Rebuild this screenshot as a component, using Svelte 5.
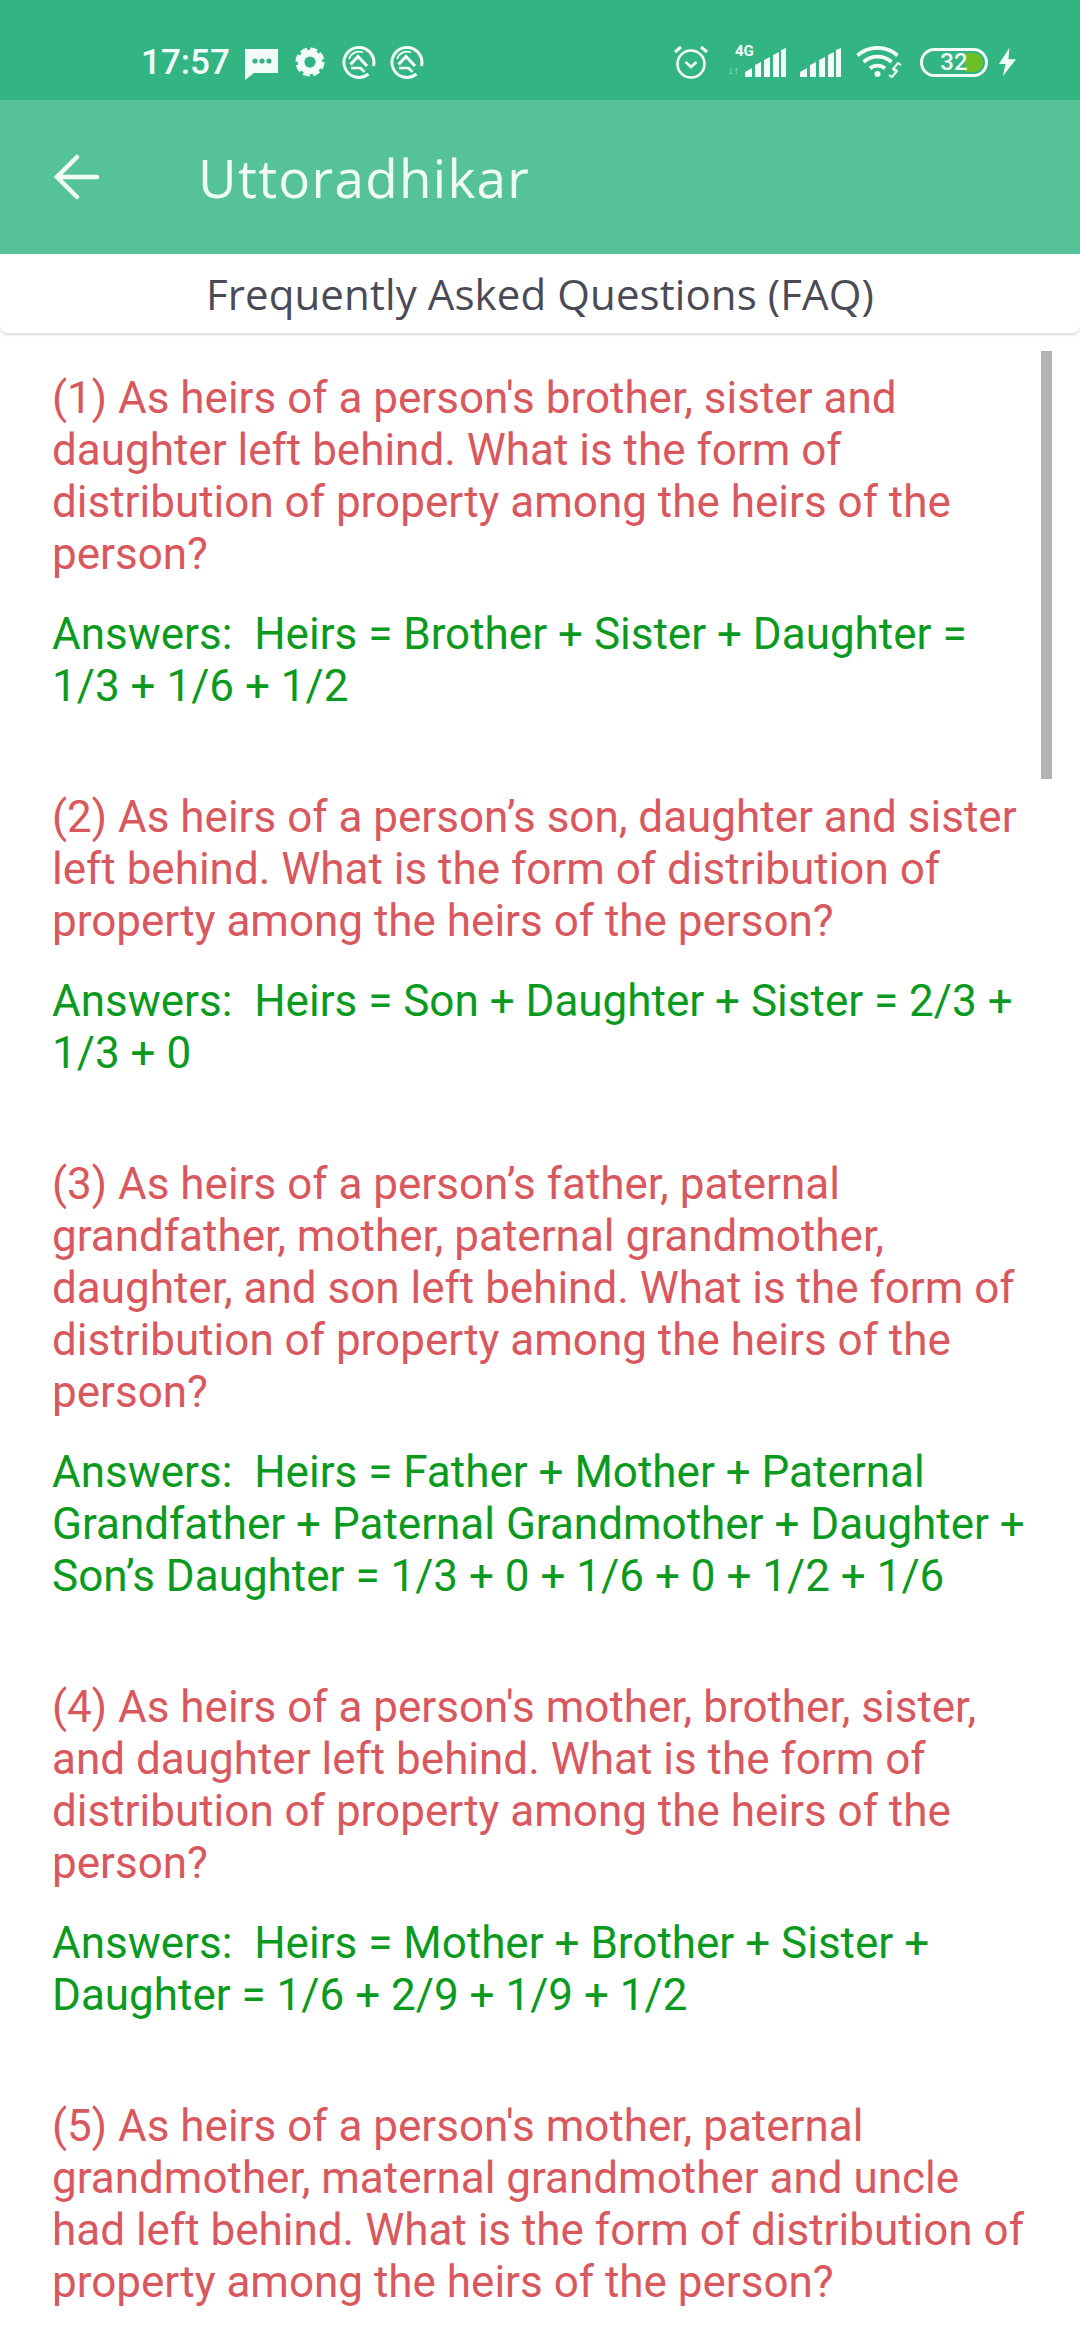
<script lang="ts">
	const faqs = [
		{
			q: "(1) As heirs of a person's brother, sister and daughter left behind. What is the form of distribution of property among the heirs of the person?",
			a: 'Answers:\u00a0 Heirs = Brother + Sister + Daughter = 1/3 + 1/6 + 1/2'
		},
		{
			q: '(2) As heirs of a person’s son, daughter and sister left behind. What is the form of distribution of property among the heirs of the person?',
			a: 'Answers:\u00a0 Heirs = Son + Daughter + Sister = 2/3 + 1/3 + 0'
		},
		{
			q: '(3) As heirs of a person’s father, paternal grandfather, mother, paternal grandmother, daughter, and son left behind. What is the form of distribution of property among the heirs of the person?',
			a: 'Answers:\u00a0 Heirs = Father + Mother + Paternal Grandfather + Paternal Grandmother + Daughter + Son’s Daughter = 1/3 + 0 + 1/6 + 0 + 1/2 + 1/6'
		},
		{
			q: "(4) As heirs of a person's mother, brother, sister, and daughter left behind. What is the form of distribution of property among the heirs of the person?",
			a: 'Answers:\u00a0 Heirs = Mother + Brother + Sister + Daughter = 1/6 + 2/9 + 1/9 + 1/2'
		},
		{
			q: "(5) As heirs of a person's mother, paternal grandmother, maternal grandmother and uncle had left behind. What is the form of distribution of property among the heirs of the person?",
			a: ''
		}
	];
</script>

{#snippet qLogo(links: number)}
	<svg class="ic" style:margin-left="{links}px" width="34" height="34" viewBox="0 0 34 34" fill="none" stroke="#f2fbf7">
		<path d="M26.500 29A15 15 0 1 1 31.500 21" stroke-width="3" />
		<path d="M8.500 19.500L16 11.500l9 9.500" stroke-width="3.200" />
		<path d="M9 23h9.500l4 4" stroke-width="2.600" />
		<path d="M21 7.500A10.500 10.500 0 0 0 7 14" stroke-width="1.800" />
	</svg>
{/snippet}

<div class="screen">
	<div class="status">
		<span class="zeit">17:57</span>
		<svg class="ic" style="margin-left:15px;margin-top:3px" width="33" height="32" viewBox="0 0 33 32">
			<path d="M0 1h33v24H9l-9 7z" fill="#f2fbf7" />
			<circle cx="10" cy="13" r="2.600" fill="#32b583" /><circle cx="17" cy="13" r="2.600" fill="#32b583" /><circle cx="24" cy="13" r="2.600" fill="#32b583" />
		</svg>
		<svg class="ic" style="margin-left:17px" width="30" height="30" viewBox="0 0 32 32">
			<circle cx="16" cy="16" r="9.500" fill="none" stroke="#f2fbf7" stroke-width="7" />
			<circle cx="16" cy="16" r="13" fill="none" stroke="#f2fbf7" stroke-width="5" stroke-dasharray="7 3.200" />
		</svg>
		{@render qLogo(17)}
		{@render qLogo(14)}

		<span class="rest"></span>

		<svg class="ic" width="36" height="36" viewBox="0 0 36 36" fill="none" stroke="#f2fbf7">
			<circle cx="18" cy="20" r="13.500" stroke-width="2.600" />
			<path d="M12.500 18l5.500 5 5.500-5" stroke-width="2.600" />
			<path d="M2 8l6-5M34 8l-6-5" stroke-width="3" />
		</svg>
		<div class="vierg">
			<span class="vg">4G</span>
			<span class="pfeile">↓↑</span>
			<svg class="balken" width="41" height="29" viewBox="0 0 41 29" fill="#f2fbf7">
				<path d="M0 29v-5l7-4v9zM10 29V17l6-3v15zM19 29V12l6-3v20zM28 29V7l6-3v25zM36 29V2l5-2v29z" />
			</svg>
		</div>
		<svg class="ic" style="margin-left:14px" width="41" height="29" viewBox="0 0 41 29" fill="#f2fbf7">
			<path d="M0 29v-5l7-4v9zM10 29V17l6-3v15zM19 29V12l6-3v20zM28 29V7l6-3v25zM36 29V2l5-2v29z" />
		</svg>
		<svg class="ic" style="margin-left:15px" width="47" height="32" viewBox="0 0 47 32" fill="none" stroke="#f2fbf7">
			<path d="M1.500 9.500a30 30 0 0 1 40 0" stroke-width="3.800" />
			<path d="M7.500 16a21 21 0 0 1 28 0" stroke-width="3.800" />
			<path d="M14 22.500a11 11 0 0 1 15 0" stroke-width="3.800" />
			<circle cx="21.500" cy="28" r="3" fill="#f2fbf7" stroke="none" />
			<path d="M33 29l3 2 5-6-2-2M45 19l-3-2-5 6 2 2" stroke-width="2" />
		</svg>
		<div class="akku">
			<span class="akku-fill"></span>
			<span class="akku-zahl">32</span>
		</div>
		<svg class="ic" style="margin-left:10px" width="19" height="30" viewBox="0 0 20 30">
			<path d="M12 0L1 17h7L5 30l14-18h-8z" fill="#f2fbf7" />
		</svg>
	</div>

	<div class="toolbar">
		<svg class="zurueck" width="46" height="46" viewBox="0 0 46 46" fill="none" stroke="#f1fbf6" stroke-width="4.500" stroke-linecap="round">
			<path d="M43 23H3M23 3L3 23l20 20" />
		</svg>
		<span class="titel">Uttoradhikar</span>
	</div>

	<div class="unterkopf">Frequently Asked Questions (FAQ)</div>

	<div class="liste">
		<div class="leiste"></div>
		{#each faqs as f}
			<div class="faq">
				<p class="frage">{f.q}</p>
				{#if f.a}<p class="antwort">{f.a}</p>{/if}
			</div>
		{/each}
	</div>
</div>

<style>
	:global(body) { margin: 0; background: #fff; }
	.screen {
		width: 1080px;
		height: 2340px;
		overflow: hidden;
		display: flex;
		flex-direction: column;
		font-family: Roboto, sans-serif;
	}

	.status {
		height: 100px;
		flex-shrink: 0;
		background: #32b583;
		display: flex;
		align-items: center;
		padding: 24px 63px 0 141px;
		box-sizing: border-box;
		color: #f2fbf7;
	}
	.zeit { font-size: 35px; font-weight: 500; }
	.ic { flex-shrink: 0; display: block; }
	.rest { flex: 1; }

	.vierg { position: relative; width: 58px; height: 30px; margin-left: 19px; }
	.vg { position: absolute; left: 7px; top: -3px; font-size: 15px; line-height: 15px; font-weight: 700; }
	.pfeile { position: absolute; left: 0; bottom: 0; font-size: 11px; line-height: 12px; opacity: 0.6; }
	.balken { position: absolute; right: 0; bottom: 0; }

	.akku {
		position: relative;
		width: 68px;
		height: 29px;
		margin-left: 17px;
		border: 3px solid #f2fbf7;
		border-radius: 15px;
		box-sizing: border-box;
		overflow: hidden;
		text-align: center;
	}
	.akku-fill { position: absolute; left: 42px; top: 2px; width: 18px; height: 19px; background: #6cc024; border-radius: 0 10px 10px 0; }
	.akku-zahl { position: relative; font-size: 24px; line-height: 23px; font-weight: 500; display: block; }

	.toolbar {
		height: 154px;
		flex-shrink: 0;
		background: #55c397;
		display: flex;
		align-items: center;
		padding-left: 54px;
		box-sizing: border-box;
	}
	.zurueck { flex-shrink: 0; }
	.titel {
		margin-left: 98px;
		color: #f1fbf6;
		font-family: "Open Sans", sans-serif;
		font-size: 53px;
		letter-spacing: 1.300px;
	}

	.unterkopf {
		height: 79px;
		flex-shrink: 0;
		background: #fff;
		border-radius: 0 0 8px 8px;
		box-shadow: 0 2px 3px rgba(0, 0, 0, 0.14);
		display: flex;
		align-items: center;
		justify-content: center;
		color: #4a4b57;
		font-family: "Open Sans", sans-serif;
		font-size: 42px;
		letter-spacing: 0.100px;
		position: relative;
	}

	.liste {
		position: relative;
		flex: 1;
		padding: 39px 50px 0 52px;
	}
	.leiste {
		position: absolute;
		left: 1041px;
		top: 18px;
		width: 11px;
		height: 428px;
		background: #b3b3b3;
	}
	.faq { margin-bottom: 79px; }
	p {
		margin: 0;
		font-size: 44px;
		line-height: 52px;
	}
	.frage { color: #d9585e; }
	.antwort { color: #0b9a20; margin-top: 28px; }
</style>
